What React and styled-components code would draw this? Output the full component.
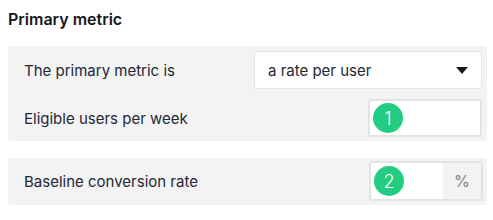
import styled, { createGlobalStyle } from 'styled-components';

const Global = createGlobalStyle`
  body {
    margin: 0;
    background: #ffffff;
    font-family: Inter, "Noto Sans", sans-serif;
    color: #1f2430;
  }
`;

const Page = styled.div`
  width: 493px;
  padding: 8px 6px 8px 8px;
  box-sizing: border-box;
`;

const Title = styled.h3`
  margin: 0 0 17px 0;
  padding-top: 1px;
  font-size: 16px;
  font-weight: 600;
  line-height: 20px;
  color: #15171c;
`;

const Panel = styled.div`
  background: #f3f3f3;
  border-radius: 3px;
  padding: ${p => p.$pad || '5px 5px 4px 16px'};
  display: flex;
  flex-direction: column;
  gap: 10px;
  margin-bottom: 17px;
`;

const Row = styled.div`
  display: flex;
  align-items: center;
  justify-content: space-between;
  height: 38px;
`;

const Label = styled.span`
  font-size: 15px;
  color: #232733;
`;

const Select = styled.div`
  width: 228px;
  height: 38px;
  box-sizing: border-box;
  background: #fff;
  border: 1px solid #e3e3e3;
  border-radius: 3px;
  display: flex;
  align-items: center;
  justify-content: space-between;
  padding: 0 13px 0 13px;
  font-size: 15px;
  color: #232733;
`;

const Caret = styled.span`
  width: 0;
  height: 0;
  border-left: 6px solid transparent;
  border-right: 6px solid transparent;
  border-top: 7px solid #1a1a1a;
`;

const InputBox = styled.div`
  position: relative;
  width: 114px;
  height: ${p => p.$h || 38}px;
  box-sizing: border-box;
  background: #fff;
  border: 2px solid #e3e3e3;
  border-radius: 3px;
  display: flex;
  justify-content: flex-end;
`;

const Addon = styled.div`
  width: 38px;
  background: #f3f3f3;
  display: flex;
  align-items: center;
  justify-content: center;
  font-size: 16px;
  color: #8a8a8a;
  font-weight: 500;
`;

const Badge = styled.div`
  position: absolute;
  left: 3px;
  top: 50%;
  transform: translateY(-50%);
  width: 30px;
  height: 30px;
  border-radius: 50%;
  background: #22cd82;
  color: #fff;
  font-size: 18px;
  font-weight: 300;
  display: flex;
  align-items: center;
  justify-content: center;
`;

export default function App() {
  return (
    <Page>
      <Global />
      <Title>Primary metric</Title>
      <Panel>
        <Row>
          <Label>The primary metric is</Label>
          <Select>
            a rate per user
            <Caret />
          </Select>
        </Row>
        <Row>
          <Label>Eligible users per week</Label>
          <InputBox>
            <Badge>1</Badge>
          </InputBox>
        </Row>
      </Panel>
      <Panel $pad="4px 4px 5px 16px">
        <Row>
          <Label>Baseline conversion rate</Label>
          <InputBox $h={40}>
            <Badge>2</Badge>
            <Addon>%</Addon>
          </InputBox>
        </Row>
      </Panel>
    </Page>
  );
}
